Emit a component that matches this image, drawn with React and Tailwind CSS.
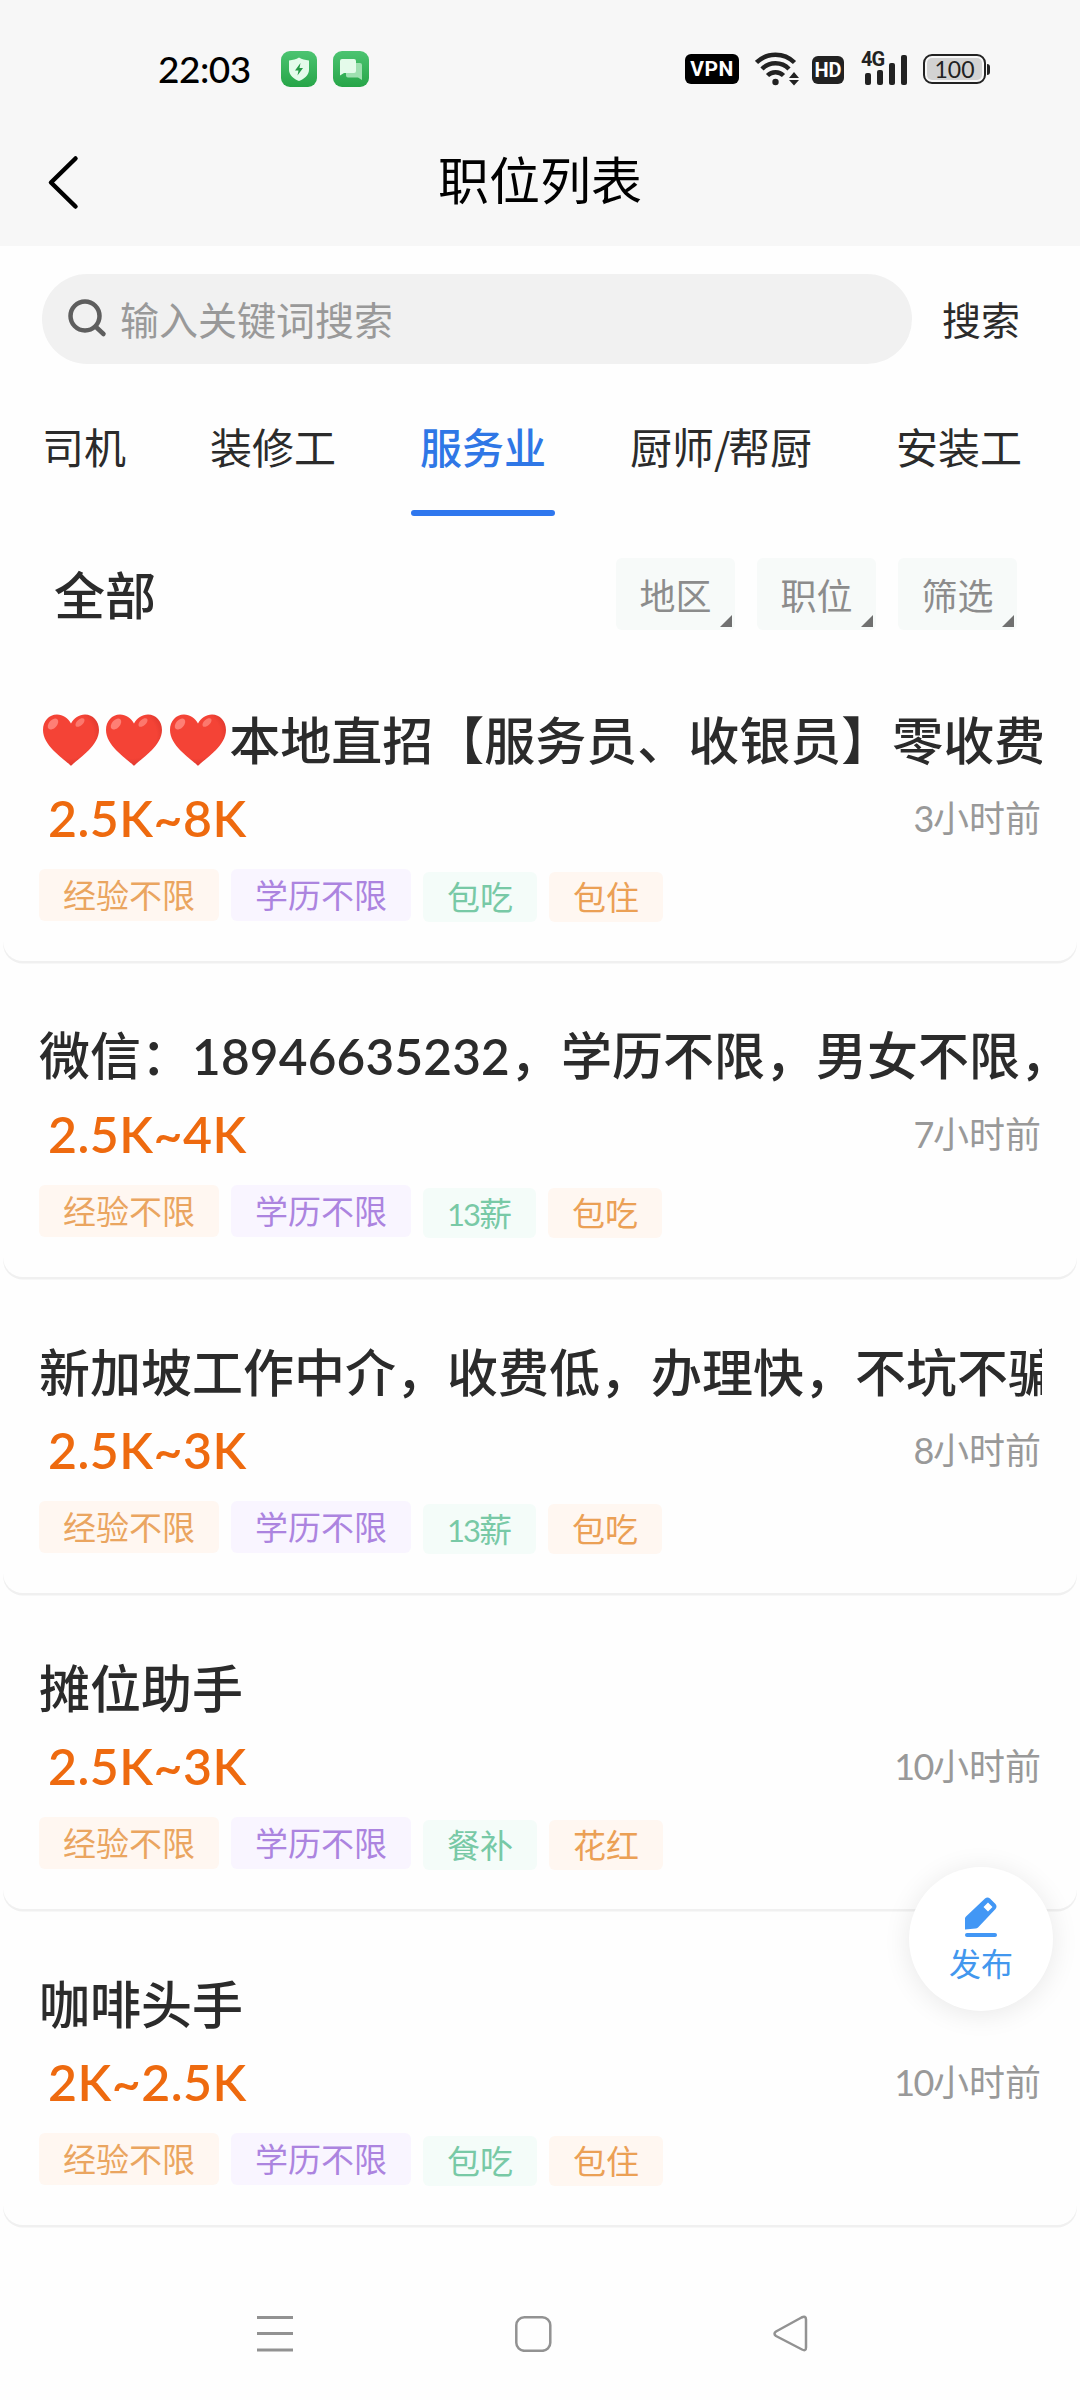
import React, { useState } from 'react';

const tabs = ['司机', '装修工', '服务业', '厨师/帮厨', '安装工'];
const filters = ['地区', '职位', '筛选'];

const jobs = [
    { id: 1, hearts: 3, title: '本地直招【服务员、收银员】零收费', salary: '2.5K~8K', time: '3小时前', extras: ['包吃', '包住'] },
    { id: 2, hearts: 0, title: '微信：18946635232，学历不限，男女不限，', salary: '2.5K~4K', time: '7小时前', extras: ['13薪', '包吃'] },
    { id: 3, hearts: 0, title: '新加坡工作中介，收费低，办理快，不坑不骗', salary: '2.5K~3K', time: '8小时前', extras: ['13薪', '包吃'] },
    { id: 4, hearts: 0, title: '摊位助手', salary: '2.5K~3K', time: '10小时前', extras: ['餐补', '花红'] },
    { id: 5, hearts: 0, title: '咖啡头手', salary: '2K~2.5K', time: '10小时前', extras: ['包吃', '包住'] },
];

// digits and latin signs get their own face, the rest stays in the CJK font
const Mixed = ({ text, className }) => (
    text.split(/([0-9/]+)/).map((part, i) => (
        i % 2 ? <span key={i} className={className}>{part}</span> : part
    ))
);

const Heart = () => (
    <svg width="63.4" height="54" viewBox="0 0 63.4 54" className="shrink-0 mt-1">
        <defs>
            <radialGradient id="heartFill" cx="0.45" cy="0.4" r="0.65">
                <stop offset="0.7" stopColor="#f44336" />
                <stop offset="1" stopColor="#d8352c" />
            </radialGradient>
        </defs>
        <path d="M32 53C27 47 4 34 4 17C4 8 10 1.500 18 1.500C24 1.500 29 5 32 10.500C35 5 40 1.500 46 1.500C54 1.500 60 8 60 17C60 34 37 47 32 53Z" fill="url(#heartFill)" />
        <ellipse cx="14" cy="11" rx="6.500" ry="4" transform="rotate(-48 14 11)" fill="#ff8a80" opacity="0.85" />
        <ellipse cx="41" cy="9.500" rx="5.500" ry="3" transform="rotate(-42 41 9.500)" fill="#ff8a80" opacity="0.75" />
    </svg>
);

const StatusBar = () => (
    <div className="h-[120px] flex items-start justify-between pl-[158px] pr-[90px] pt-[49px]">
        <div className="flex items-center h-10">
            <span className="w-[123px] text-[37px] leading-10 font-medium text-black tracking-[-0.5px] font-['Lato','Noto_Sans_CJK_SC',sans-serif]">22:03</span>
            <svg width="36" height="36" viewBox="0 0 36 36">
                <defs>
                    <linearGradient id="appFill" x1="0" y1="0" x2="0" y2="1">
                        <stop offset="0" stopColor="#4cc471" />
                        <stop offset="1" stopColor="#27a548" />
                    </linearGradient>
                </defs>
                <rect width="36" height="36" rx="9" fill="url(#appFill)" />
                <path d="M18 6.500C21 8.500 24 9 28 9.500V19C28 24 23 28 18 30C13 28 8 24 8 19V9.500C12 9 15 8.500 18 6.500Z" fill="#e4fbea" />
                <path d="M19.500 12L14 19.500H17.500L16.500 24.500L22 17H18.500Z" fill="#249a45" />
            </svg>
            <svg width="36" height="36" viewBox="0 0 36 36" className="ml-4">
                <rect width="36" height="36" rx="9" fill="url(#appFill)" />
                <path d="M13 14Q13 12 15 12H27Q29 12 29 14V29L25 26.500H15Q13 26.500 13 24.500Z" fill="#9ee0b0" />
                <path d="M7 10Q7 8 9 8H21Q23 8 23 10V20Q23 22 21 22H11L7 24.500Z" fill="#e4fbea" />
            </svg>
        </div>
        <div className="flex items-center h-10 text-[#222]">
            <div className="w-[54px] h-[30px] rounded-md bg-black text-white text-[21px] leading-[30px] font-bold text-center tracking-[0.5px] font-['Roboto',sans-serif]">VPN</div>
            <svg width="45" height="34" viewBox="0 0 45 34" className="ml-4" fill="none" stroke="currentColor" strokeWidth="4.500">
                <path d="M1.500 10.500A27 27 0 0 1 39.500 10.500" />
                <path d="M7 17A19 19 0 0 1 34 17" />
                <path d="M12.500 23.500A11.500 11.500 0 0 1 28.500 23.500" />
                <circle cx="20.500" cy="30" r="3.200" fill="currentColor" stroke="none" />
                <path d="M39 20L44 26H34ZM39 33.500L34 28H44Z" fill="currentColor" stroke="none" />
            </svg>
            <div className="ml-3 mt-px w-8 h-7 rounded-md bg-[#222] text-white text-[20px] leading-7 font-bold text-center font-['Roboto',sans-serif]">HD</div>
            <div className="relative ml-[17px] w-[46px] h-[34px]">
                <span className="absolute left-0 -top-px text-[20px] leading-[17px] font-bold tracking-[-1px] font-['Roboto',sans-serif]">4G</span>
                <svg width="46" height="34" viewBox="0 0 46 34" fill="currentColor">
                    <rect x="4" y="21" width="6" height="12" rx="2" />
                    <rect x="16" y="18" width="6" height="15" rx="2" />
                    <rect x="28" y="11" width="6" height="22" rx="2" />
                    <rect x="40" y="3" width="6" height="30" rx="2" />
                </svg>
            </div>
            <div className="ml-4 w-[63px] h-[30px] rounded-[9px] border-2 border-[#222] p-[2px]">
                <div className="h-full rounded-[5px] bg-[#d2d2d2] text-[23px] leading-[23px] text-center font-['Lato','Noto_Sans_CJK_SC',sans-serif]">100</div>
            </div>
            <div className="ml-px w-[3px] h-[11px] rounded-r-sm bg-[#222]" />
        </div>
    </div>
);

const NavHeader = () => (
    <div className="h-[126px] grid grid-cols-3 items-start">
        <svg width="40" height="60" viewBox="0 0 40 60" className="ml-[42px] mt-8" fill="none" stroke="#000" strokeWidth="4.500" strokeLinecap="round" strokeLinejoin="round">
            <path d="M33.500 6.500L9 30.500L33.500 54.500" />
        </svg>
        <h1 className="mt-[23px] text-[51px] leading-[70px] text-black text-center font-normal">职位列表</h1>
    </div>
);

const JobCard = ({ job }) => (
    <div className="mx-[3px] h-[316px] px-[36px] rounded-b-[20px] shadow-[0_2.5px_0_#f0f0f0]">
        <div className="pt-[60px]">
            <div className="h-[66px] flex items-center overflow-hidden w-[1003px] whitespace-nowrap">
                {Array.from({ length: job.hearts }).map((_, i) => <Heart key={i} />)}
                <h2 className="text-[51px] leading-[66px] font-medium text-[#2b2b2b]">
                    <Mixed text={job.title} className="font-['Lato',sans-serif] text-[49.5px] font-semibold tracking-[0.2px]" />
                </h2>
            </div>
            <div className="mt-[11px] h-[66px] flex items-center justify-between">
                <span className="ml-[9px] pt-[5px] text-[50px] leading-[66px] font-semibold text-[#ee6a0f] tracking-[0.5px] font-['Lato','Noto_Sans_CJK_SC',sans-serif]">{job.salary}</span>
                <span className="pt-[3px] text-[36px] leading-[66px] text-[#999]">
                    <Mixed text={job.time} className="font-['Lato',sans-serif] tracking-[-1.5px]" />
                </span>
            </div>
            <div className="mt-[21px] flex items-start gap-3 text-[33px]">
                <span className="h-[52px] px-6 rounded-md leading-[50px] text-[#eaa560] bg-[#fff7f1]">经验不限</span>
                <span className="h-[52px] px-6 rounded-md leading-[50px] text-[#ac84df] bg-[#f9f5ff]">学历不限</span>
                {job.extras.map((extra, i) => (
                    <span key={extra} className={`mt-[3px] h-[50px] px-6 rounded-md leading-[49px] ${i === 0 ? 'text-[#78c9a6] bg-[#f4fcf9]' : 'text-[#eba055] bg-[#fff7f1]'}`}>
                        <Mixed text={extra} className="font-['Lato',sans-serif] text-[31px] tracking-[-2px]" />
                    </span>
                ))}
            </div>
        </div>
    </div>
);

const App = () => {
    const [activeTab, setActiveTab] = useState('服务业');

    return (
        <div className="relative w-[1080px] h-[2400px] overflow-hidden bg-[#fefefe] flex flex-col font-['Noto_Sans_CJK_SC',sans-serif]">
            <header className="bg-[#f7f7f7]">
                <StatusBar />
                <NavHeader />
            </header>

            {/* Search */}
            <div className="flex items-center pl-[42px] pt-7">
                <div className="w-[870px] h-[90px] rounded-full bg-[#f1f1f1] flex items-center pl-[25px]">
                    <svg width="42" height="42" viewBox="0 0 42 42" fill="none" stroke="#5e5e5e" strokeWidth="4.500" strokeLinecap="round">
                        <circle cx="18" cy="18" r="14.500" />
                        <path d="M29 29L36.500 36" />
                    </svg>
                    <span className="ml-[11px] -mt-0.5 text-[39px] leading-[60px] text-[#999]">输入关键词搜索</span>
                </div>
                <button className="ml-[30px] -mt-0.5 text-[39px] leading-[60px] text-[#2b2b2b]">搜索</button>
            </div>

            {/* Categories */}
            <nav className="flex pt-[50px]">
                {tabs.map((tab) => (
                    <button
                        key={tab}
                        onClick={() => setActiveTab(tab)}
                        className={`relative h-[102px] px-[42px] text-[42px] leading-[63px] whitespace-nowrap ${
                            activeTab === tab ? 'font-medium text-[#2f77e6]' : 'text-[#2b2b2b]'
                        }`}
                    >
                        <span className="flex h-full items-start">
                            <Mixed text={tab} className="w-[14px]" />
                        </span>
                        {activeTab === tab && <span className="absolute left-[33px] bottom-0 w-36 h-1.5 rounded-full bg-[#2f77ee]" />}
                    </button>
                ))}
            </nav>

            {/* Filters */}
            <div className="mt-[42px] h-[72px] flex items-center justify-between pl-[54px] pr-[63px]">
                <span className="-mt-0.5 text-[51px] leading-[72px] font-medium text-[#2b2b2b]">全部</span>
                <div className="flex gap-[22px]">
                    {filters.map((name) => (
                        <button key={name} className="relative w-[119px] h-[72px] rounded-md bg-[#f7faf9] text-[36px] leading-[70px] text-[#8c8c8c] text-center">
                            {name}
                            <svg width="12" height="12" viewBox="0 0 12 12" className="absolute right-[3px] bottom-[3px]">
                                <path d="M12 0V12H0Z" fill="#707070" />
                            </svg>
                        </button>
                    ))}
                </div>
            </div>

            <main className="mt-[15px]">
                {jobs.map((job) => <JobCard key={job.id} job={job} />)}
            </main>

            {/* Publish */}
            <button className="absolute left-[909px] top-[1867px] size-36 rounded-full bg-white shadow-[0_3px_28px_rgba(0,0,0,0.09)] flex flex-col items-center pt-[29px] text-[#4297ee]">
                <svg width="34" height="42" viewBox="0 0 34 42">
                    <path fillRule="evenodd" d="M21 2.500Q23.500 0.500 26 2.500L31.500 8Q33.500 10.500 31.500 13L14 31.500Q13 32.500 11.500 32.500L1 33.500V22.500Q1 21.500 2 20.500ZM24 6.500L19.500 11L24 15.500L28.500 11Z" fill="#4297f5" />
                    <path d="M3 39H31" stroke="#4297f5" strokeWidth="4" strokeLinecap="round" />
                </svg>
                <span className="mt-0.5 text-[32px] leading-[44px]">发布</span>
            </button>

            {/* System navigation */}
            <footer className="mt-auto h-[86px] flex items-start pl-[256px] text-[#929292]">
                <svg width="38" height="38" viewBox="0 0 38 38" stroke="currentColor" strokeWidth="3">
                    <path d="M1 3.500H37M1 19.500H37M1 36H37" />
                </svg>
                <svg width="38" height="38" viewBox="0 0 38 38" className="ml-[220px]" fill="none" stroke="currentColor" strokeWidth="2.500">
                    <rect x="2.300" y="3.300" width="34" height="33.500" rx="8" />
                </svg>
                <svg width="38" height="38" viewBox="0 0 38 38" className="ml-[220px]" fill="none" stroke="currentColor" strokeWidth="2.500" strokeLinejoin="round">
                    <path d="M4 17.500L29.500 3.500Q34 1.500 34 5.500V33.500Q34 37.500 30 35.500L4 22Q1 19.700 4 17.500Z" />
                </svg>
            </footer>
        </div>
    );
};

export default App;
